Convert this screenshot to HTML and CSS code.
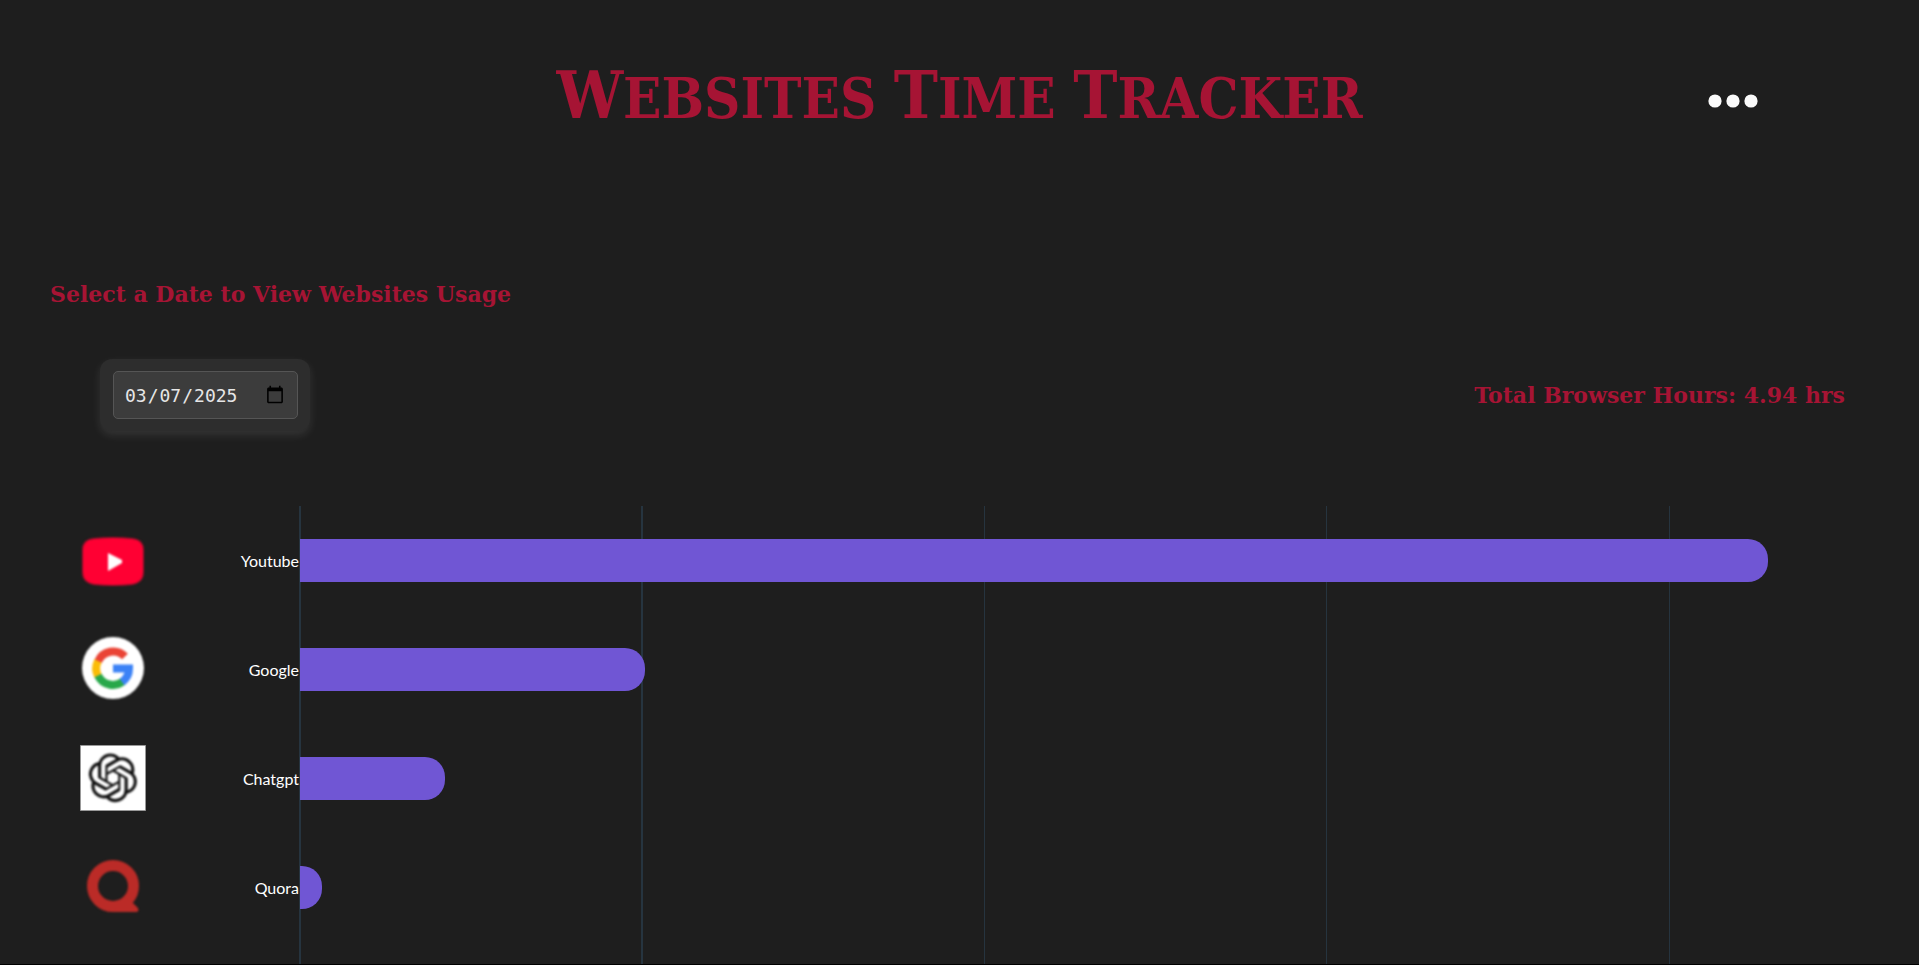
FILE: index.html
```html
<!DOCTYPE html>
<html lang="en">
<head>
<meta charset="utf-8">
<title>Websites Time Tracker</title>
<link rel="stylesheet" href="styles.css">
</head>
<body>
<div class="page">
  <header class="header">
    <h1 class="title"><span class="word">Websites</span> <span class="word">Time</span> <span class="word">Tracker</span></h1>
    <button class="menu" type="button" aria-label="Menu">
      <svg width="50" height="14" viewBox="0 0 50 14" fill="#fafafa"><circle cx="7" cy="7" r="6.6"/><circle cx="25" cy="7" r="6.6"/><circle cx="43" cy="7" r="6.6"/></svg>
    </button>
  </header>
  <main class="main">
    <h2 class="subtitle"><label for="date">Select a Date to View Websites Usage</label></h2>
    <div class="toolbar">
      <div class="date-card"><input class="date" id="date" type="date" value="2025-03-07"></div>
      <h2 class="subtitle">Total Browser Hours: 4.94 hrs</h2>
    </div>
    <section class="chart">
      <div class="gridlines"><i class="line strong"></i><i class="line strong"></i><i class="line"></i><i class="line"></i><i class="line"></i></div>
      <ul class="rows">
        <li class="row">
          <svg class="icon" viewBox="0 0 66 66"><g class="soft"><path d="M14 11Q33 9 52 11 63 12 63 22V44Q63 54 52 56 33 58 14 56 3 54 3 44V22Q3 12 14 11z" fill="#ff0033" stroke="#ff0033" stroke-opacity=".5" stroke-width="2"/><path d="M28 25 42 32v3L28 43z" fill="#fff"/></g></svg>
          <span class="name">Youtube</span>
          <div class="track"><div class="bar" style="width:95.3%"></div></div>
        </li>
        <li class="row">
          <svg class="icon" viewBox="0 0 66 66"><g class="soft"><circle cx="33" cy="31" r="31" fill="#fff"/><g fill="none" stroke-width="8"><path d="M45 19.500A16.500 16.500 0 0 0 18 24.500" stroke="#ea4335"/><path d="M18 24a16.500 16.500 0 0 0 0 15" stroke="#fbbc05"/><path d="M18 38.500A16.500 16.500 0 0 0 43.500 44" stroke="#27a84a"/><path d="M42 45A16.500 16.500 0 0 0 49 31.500H33" stroke="#3b82f6"/></g></g></svg>
          <span class="name">Google</span>
          <div class="track"><div class="bar" style="width:22.4%"></div></div>
        </li>
        <li class="row">
          <svg class="icon" viewBox="0 0 66 66"><path d="M.5-.5h65v65H.5z" fill="#fff" stroke="#999"/><g class="soft"><path transform="translate(8.500 7.500) scale(2.030)" fill="#111" d="M22.282 9.821a5.985 5.985 0 0 0-.516-4.910 6.046 6.046 0 0 0-6.510-2.900A6.065 6.065 0 0 0 4.981 4.182a5.985 5.985 0 0 0-3.998 2.900 6.046 6.046 0 0 0 .743 7.097 5.980 5.980 0 0 0 .511 4.911 6.051 6.051 0 0 0 6.515 2.900A5.985 5.985 0 0 0 13.260 24a6.056 6.056 0 0 0 5.772-4.206 5.990 5.990 0 0 0 3.998-2.900 6.056 6.056 0 0 0-.747-7.073zM13.260 22.430a4.476 4.476 0 0 1-2.876-1.041l.141-.081 4.779-2.758a.795.795 0 0 0 .393-.681v-6.737l2.020 1.169a.071.071 0 0 1 .038.052v5.583a4.504 4.504 0 0 1-4.495 4.494zM3.600 18.304a4.471 4.471 0 0 1-.535-3.014l.142.085 4.783 2.759a.771.771 0 0 0 .781 0l5.843-3.369v2.332a.080.080 0 0 1-.033.062L9.740 19.950a4.499 4.499 0 0 1-6.140-1.646zM2.341 7.896a4.485 4.485 0 0 1 2.366-1.973V11.600a.766.766 0 0 0 .388.677l5.815 3.355-2.020 1.169a.076.076 0 0 1-.071 0l-4.830-2.787A4.504 4.504 0 0 1 2.341 7.872zm16.597 3.856-5.833-3.388L15.119 7.200a.076.076 0 0 1 .071 0l4.830 2.791a4.494 4.494 0 0 1-.677 8.105v-5.678a.790.790 0 0 0-.405-.666zm2.010-3.024-.141-.085-4.774-2.782a.776.776 0 0 0-.785 0L9.409 9.230V6.897a.066.066 0 0 1 .028-.061l4.830-2.787a4.499 4.499 0 0 1 6.681 4.660zM8.307 12.863l-2.020-1.164a.080.080 0 0 1-.038-.057V6.075a4.499 4.499 0 0 1 7.376-3.454l-.142.081-4.778 2.758a.795.795 0 0 0-.393.682zm1.097-2.366 2.602-1.500 2.607 1.500v3l-2.597 1.500-2.607-1.500z"/></g></svg>
          <span class="name">Chatgpt</span>
          <div class="track"><div class="bar" style="width:9.4%"></div></div>
        </li>
        <li class="row">
          <svg class="icon" viewBox="0 0 66 66"><g class="soft"><circle cx="33" cy="31" r="20.500" fill="none" stroke="#bb2b27" stroke-width="11"/><path d="M33 57h24q3-2 0-5l-4-4-7-5-8 8z" fill="#bb2b27"/></g></svg>
          <span class="name">Quora</span>
          <div class="track"><div class="bar" style="width:1.4%"></div></div>
        </li>
      </ul>
    </section>
  </main>
</div>
</body>
</html>
```

FILE: styles.css
```css
* { box-sizing: border-box; }
body { margin: 0; background: #1e1e1e; color: #fff; font-family: Lato, sans-serif; }
.page { min-height: 100vh; display: flex; flex-direction: column; border-bottom: 1px solid #000; }
.header { display: grid; grid-template-columns: 1fr auto 1fr; align-items: center; padding: 51px 161px 0 161px; }
.title { grid-column: 2; margin: 0; color: #a61434; font: bold 56px/88px "DejaVu Serif Condensed", "DejaVu Serif", serif; text-transform: uppercase; white-space: nowrap; }
.word { display: inline-block; }
.word::first-letter { font-size: 66px; }
.menu { justify-self: end; display: flex; padding: 8px 0; border: 0; background: none; cursor: pointer; margin-top: 8px; }
.main { flex: 1; display: flex; flex-direction: column; padding: 136px 74px 0 50px; }
.subtitle { margin: 0; color: #a61434; font: bold 22px/32px "DejaVu Serif", serif; }
.toolbar { display: flex; justify-content: space-between; align-items: center; margin-top: 49px; padding-left: 50px; }
.date-card { padding: 12px 12px 12px 13px; border-radius: 12px; background: #2d2d2d; box-shadow: 0 4px 10px rgba(255, 255, 255, .1); }
.date { display: block; width: 185px; height: 48px; padding: 8px 10px; border: 1px solid #555; border-radius: 5px; background: #3c3c3c; color: #e6e6e6; font: 18px "DejaVu Sans Mono", monospace; }
.date::-webkit-calendar-picker-indicator { width: 20px; height: 20px; }
.chart { position: relative; flex: 1; margin-top: 75px; padding: 0 5px 0 30px; }
.gridlines { position: absolute; inset: 0 5px 0 249px; display: grid; grid-template-columns: repeat(4, 2fr) 1fr; }
.line { border-left: 1px solid #26343f; }
.strong { border-left-width: 2px; }
.rows { position: relative; margin: 0; padding: 0; list-style: none; }
.row { display: grid; grid-template-columns: 66px 153px 1fr; align-items: center; height: 109px; }
.icon { width: 66px; height: 66px; overflow: visible; }
.soft { filter: blur(1px); }
.name { text-align: right; font-size: 16px; line-height: 20px; }
.track { padding-left: 1px; }
.bar { height: 43px; border-radius: 0 20px 20px 0; background: #7056d4; }
```
